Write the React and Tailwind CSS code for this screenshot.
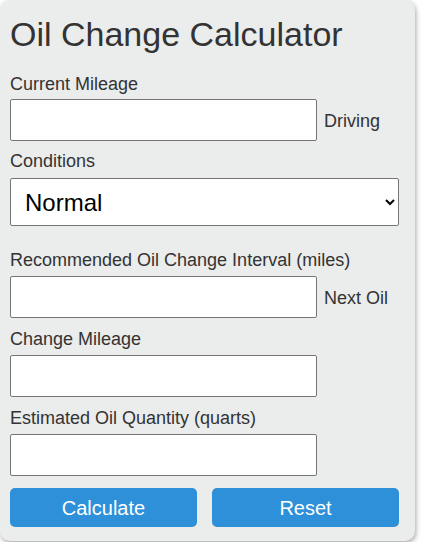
import { useState } from "react";

const labelCls = "block text-[18px] leading-[18px] text-[#333]";
const inputCls =
  "block w-[307px] h-[42px] shrink-0 bg-white border border-[#767676] rounded-[2px] px-2 text-[18px] text-black outline-none";

const App = () => {
  const [condition, setCondition] = useState("normal");

  return (
    <div className="w-[430px] h-[542px] bg-white" style={{ fontFamily: '"Liberation Sans", Arial, sans-serif' }}>
      <div className="w-[415px] bg-[#ebecec] rounded-[10px] shadow-[1px_2px_5px_rgba(0,0,0,0.35)] pl-[10px] pr-[16px] pt-[17px] pb-[14px]">
        <h1 className="text-[34px] leading-[34px] font-normal text-[#333]">Oil Change Calculator</h1>

        <form onSubmit={(e) => e.preventDefault()}>
          <label className={`${labelCls} mt-[24px]`}>Current Mileage</label>
          <div className="flex items-center mt-[6px]">
            <input type="number" className={inputCls} />
            <span className="ml-[7px] mt-[2px] text-[18px] leading-[18px] text-[#333]">Driving</span>
          </div>

          <label className={`${labelCls} mt-[11px]`}>Conditions</label>
          <select
            value={condition}
            onChange={(e) => setCondition(e.target.value)}
            className="block w-[389px] h-[48px] mt-[8px] bg-white border border-[#767676] rounded-[2px] pl-[10px] pr-[6px] text-[24px] text-black outline-none"
          >
            <option value="normal">Normal</option>
            <option value="severe">Severe</option>
          </select>

          <label className={`${labelCls} mt-[25px]`}>Recommended Oil Change Interval (miles)</label>
          <div className="flex items-center mt-[7px]">
            <input type="number" className={inputCls} />
            <span className="ml-[7px] mt-[2px] text-[18px] leading-[18px] text-[#333]">Next Oil</span>
          </div>

          <label className={`${labelCls} mt-[12px]`}>Change Mileage</label>
          <input type="number" className={`${inputCls} mt-[7px]`} />

          <label className={`${labelCls} mt-[12px]`}>Estimated Oil Quantity (quarts)</label>
          <input type="number" className={`${inputCls} mt-[7px]`} />

          <div className="flex gap-[15px] mt-[12px] w-[389px]">
            <button
              type="submit"
              className="flex-1 h-[39px] rounded-[5px] bg-[#2e90d8] text-white text-[20px] cursor-pointer"
            >
              Calculate
            </button>
            <button
              type="reset"
              className="flex-1 h-[39px] rounded-[5px] bg-[#2e90d8] text-white text-[20px] cursor-pointer"
            >
              Reset
            </button>
          </div>
        </form>
      </div>
    </div>
  );
};

export default App;
